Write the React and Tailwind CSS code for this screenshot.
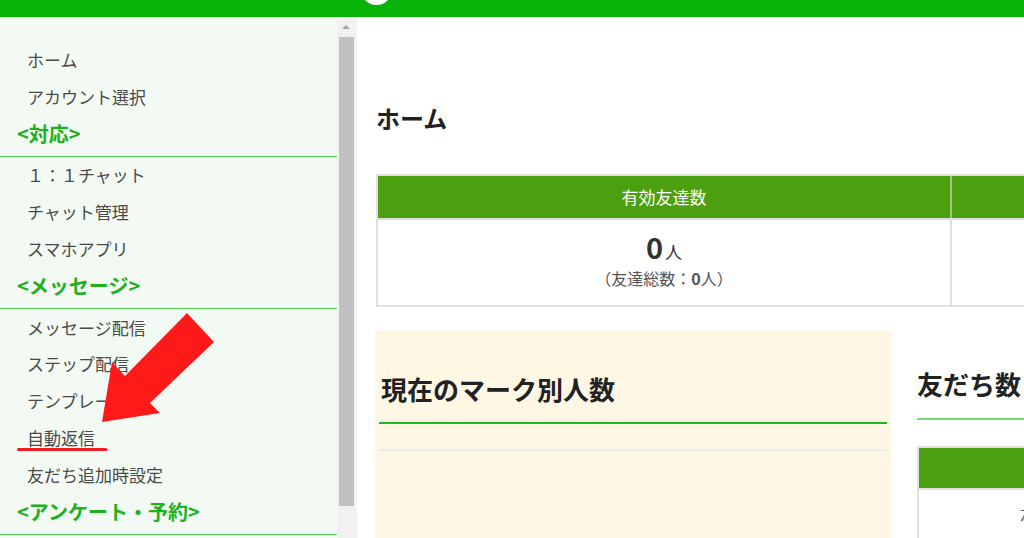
import React from "react";

const menu = [
  { type: "item", label: "ホーム" },
  { type: "item", label: "アカウント選択" },
  { type: "head", label: "<対応>" },
  { type: "item", label: "１：１チャット" },
  { type: "item", label: "チャット管理" },
  { type: "item", label: "スマホアプリ" },
  { type: "head", label: "<メッセージ>" },
  { type: "item", label: "メッセージ配信" },
  { type: "item", label: "ステップ配信" },
  { type: "item", label: "テンプレート" },
  { type: "item", label: "自動返信" },
  { type: "item", label: "友だち追加時設定" },
  { type: "head", label: "<アンケート・予約>" },
];

const App = () => {
  return (
    <div className="relative w-[1024px] h-[538px] overflow-hidden bg-white font-['Noto_Sans_CJK_JP','Noto_Sans',sans-serif]">
      {/* TOP BAR */}
      <div className="relative h-[17px] bg-[#07b307] overflow-hidden">
        <div className="absolute left-[361px] top-[-26px] w-[31px] h-[31px] rounded-full bg-white" />
      </div>

      <div className="flex h-[521px]">
        {/* SIDEBAR */}
        <div className="w-[337px] shrink-0 bg-[#f3faf3] pt-[24px]">
          {menu.map((m, i) =>
            m.type === "item" ? (
              <div
                key={i}
                className="h-[36.75px] flex items-center pl-[27px] text-[17px] leading-none text-[#4a4a4a]"
              >
                {m.label}
              </div>
            ) : (
              <div
                key={i}
                className="h-[42px] flex items-center pl-[17px] pb-[2px] border-b border-[#52d052] text-[20px] leading-none font-bold text-[#20b020]"
              >
                {m.label}
              </div>
            )
          )}
        </div>

        {/* SCROLLBAR */}
        <div className="w-[20px] shrink-0 bg-[#f1f1f1] pt-[8px]">
          <div className="ml-[5px] w-0 h-0 border-l-[4px] border-r-[4px] border-b-[4px] border-l-transparent border-r-transparent border-b-[#a3a3a3]" />
          <div className="ml-[2px] mt-[8px] w-[15px] h-[469px] bg-[#c1c1c1]" />
        </div>

        {/* MAIN */}
        <div className="flex-1 min-w-0 pl-[19px] overflow-hidden">
          <h1 className="mt-[85px] h-[32px] leading-[32px] text-[24px] font-bold text-[#222]">
            ホーム
          </h1>

          {/* STATS TABLE */}
          <div className="mt-[40px] w-[1000px] border-2 border-[#e0e0e0]">
            <div className="grid grid-cols-[574px_1fr] h-[44px] bg-[#4c9f0e] border-b-2 border-[#e0e0e0]">
              <div className="flex items-center justify-center text-[17px] text-white border-r-2 border-[#9cc785]">
                有効友達数
              </div>
              <div />
            </div>
            <div className="grid grid-cols-[574px_1fr] h-[85px]">
              <div className="flex flex-col items-center pt-[10px] border-r-2 border-[#e0e0e0]">
                <div className="h-[32px] flex items-baseline text-[#333]">
                  <span className="text-[29px] font-bold leading-[32px]">0</span>
                  <span className="text-[17px] leading-[32px] ml-[2px]">人</span>
                </div>
                <div className="mt-[5px] h-[22px] leading-[22px] text-[16px] text-[#555]">
                  （友達総数：<b className="font-bold">0</b>人）
                </div>
              </div>
              <div />
            </div>
          </div>

          {/* LOWER PANELS */}
          <div className="mt-[24px] flex w-[1000px]">
            <div className="w-[516px] shrink-0 h-[220px] ml-[-1px] bg-[#fdf7e3] px-[4px]">
              <div className="pt-[40px] pb-[15px] pl-[2px] border-b-2 border-[#1fb91f]">
                <h2 className="h-[36px] leading-[36px] text-[26px] font-bold text-[#222]">
                  現在のマーク別人数
                </h2>
              </div>
              <div className="mt-[25px] h-[2px] bg-[#e8ecef]" />
            </div>

            <div className="ml-[26px] w-[400px] shrink-0">
              <div className="pt-[35px] pb-[16px] border-b-2 border-[#79d679]">
                <h2 className="h-[36px] leading-[36px] text-[26px] font-bold text-[#222] whitespace-nowrap">
                  友だち数
                </h2>
              </div>
              <div className="mt-[26px] border-2 border-[#e0e0e0]">
                <div className="h-[42px] bg-[#4c9f0e] border-b-2 border-[#e0e0e0]" />
                <div className="h-[48px] flex items-center pl-[101px] text-[15px] text-[#555] whitespace-nowrap">
                  友だち
                </div>
              </div>
            </div>
          </div>
        </div>
      </div>

      {/* ANNOTATION */}
      <svg className="absolute left-0 top-0 pointer-events-none" width="1024" height="538">
        <polygon
          points="187,313 214,342 150,403 160,413 102,422 112,362 125,376"
          fill="#ff1a1a"
        />
        <line x1="18.5" y1="449.5" x2="106" y2="449.5" stroke="#f01c22" strokeWidth="3" strokeLinecap="round" />
      </svg>
    </div>
  );
};

export default App;
